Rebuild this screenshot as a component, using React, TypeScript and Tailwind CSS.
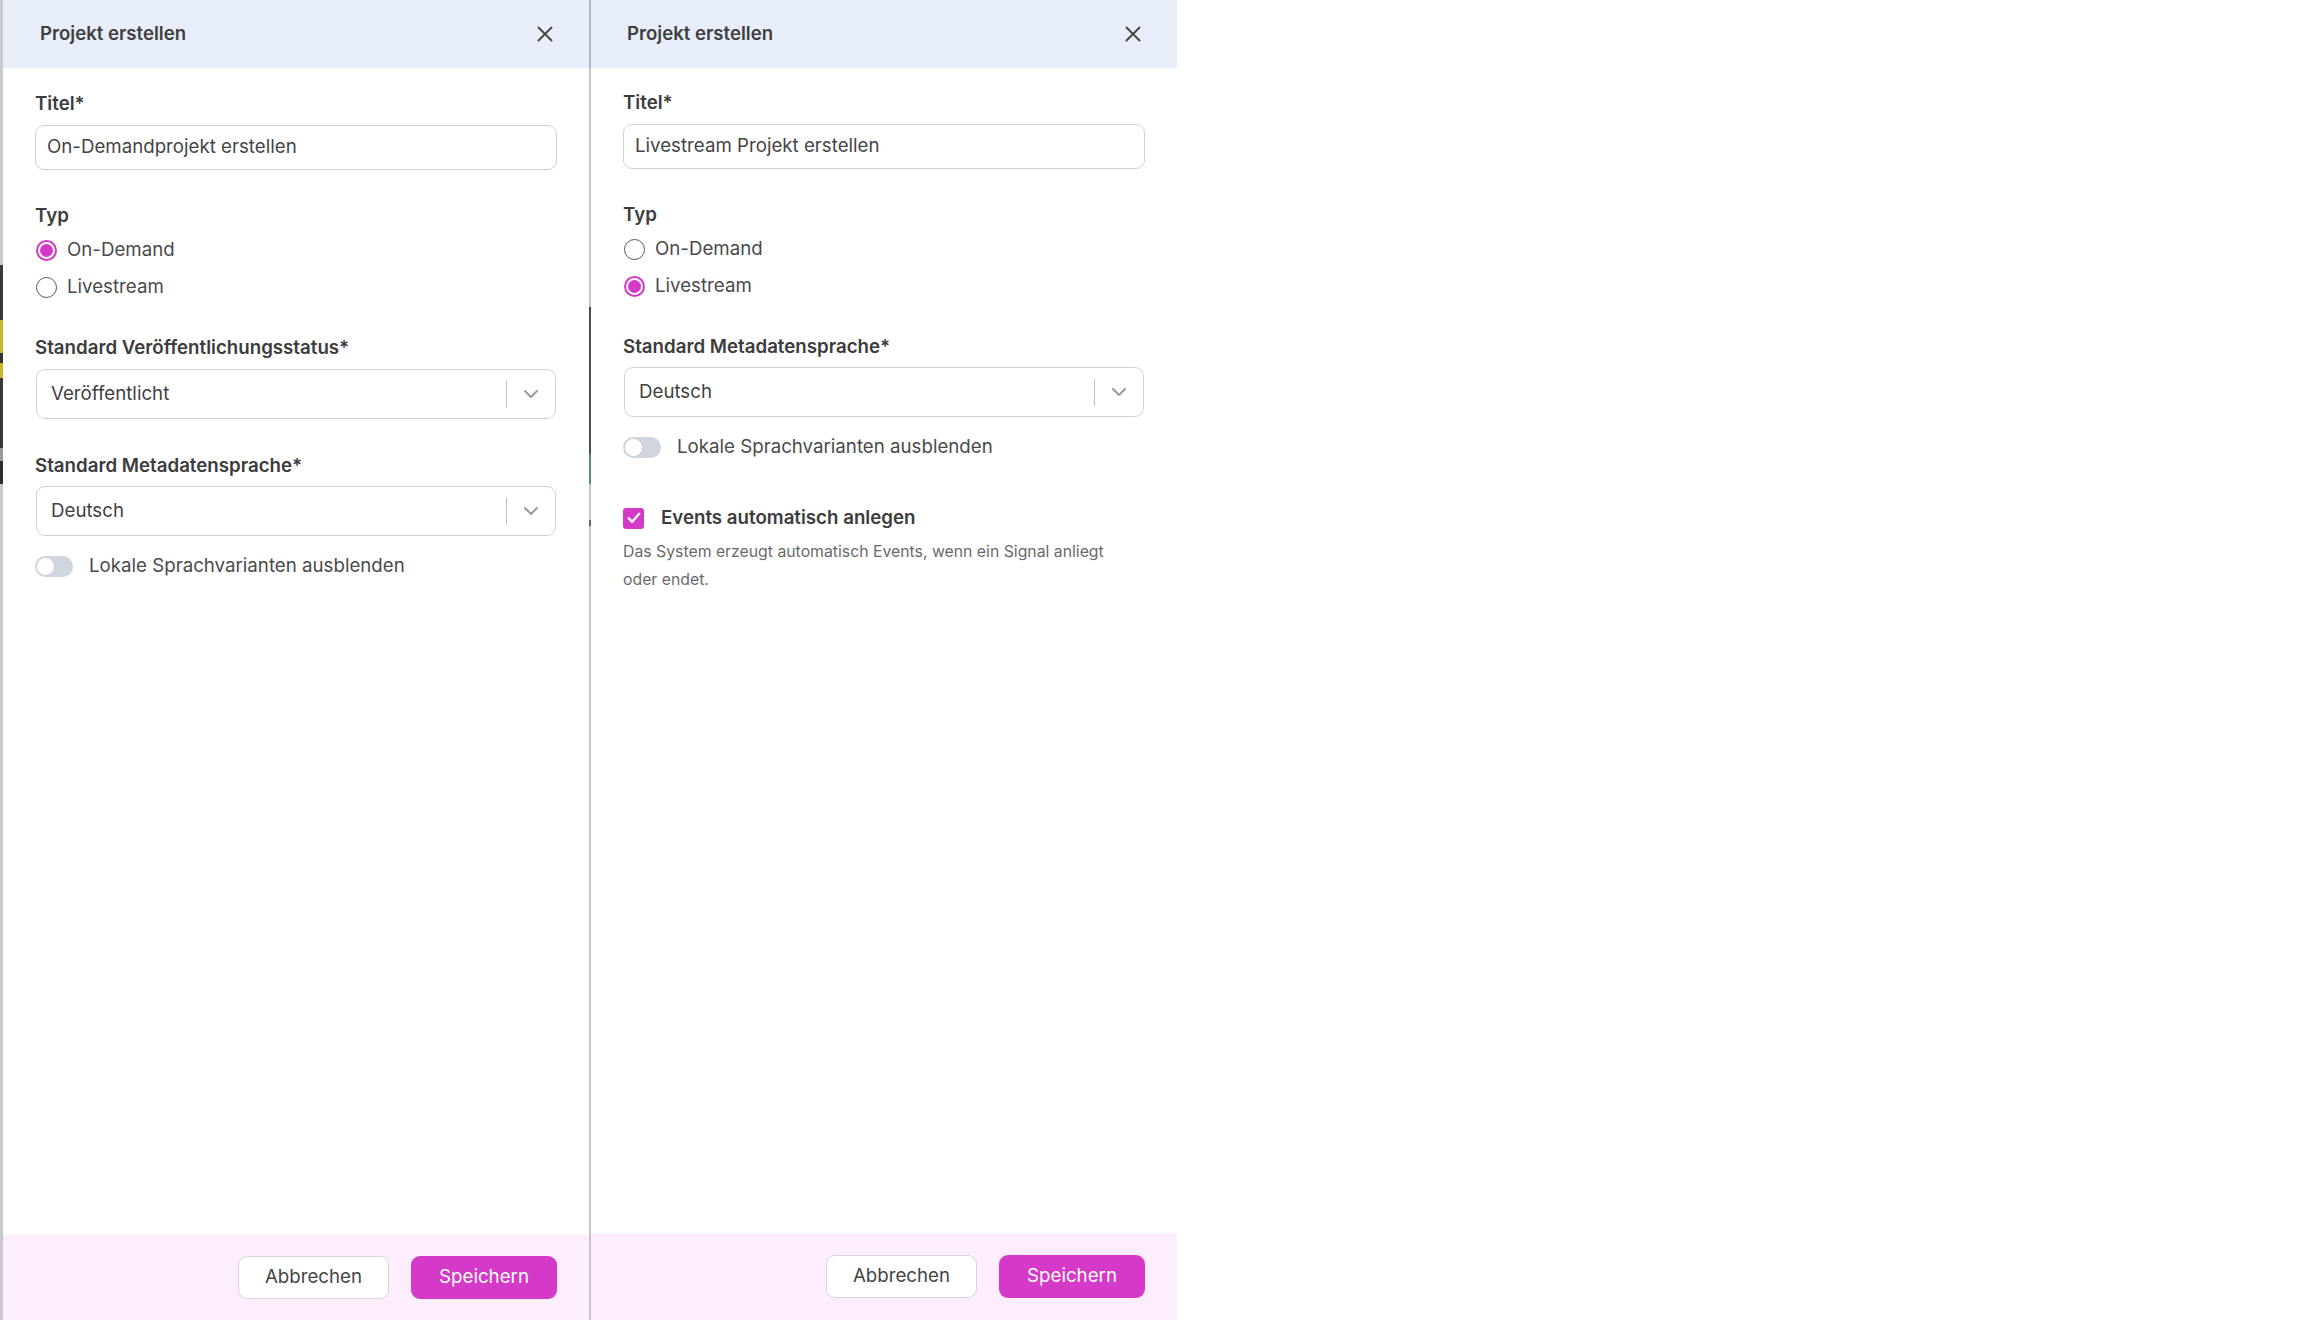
import React from "react";

function CloseIcon() {
  return (
    <svg width="16" height="16" viewBox="0 0 16 16" fill="none">
      <path d="M1.5 1.5L14.5 14.5M14.5 1.5L1.5 14.5" stroke="#454545" strokeWidth="1.9" strokeLinecap="round" />
    </svg>
  );
}

function Chevron() {
  return (
    <svg width="16" height="10" viewBox="0 0 16 10" fill="none">
      <path d="M2 2L8 8L14 2" stroke="#9a9a9a" strokeWidth="2" strokeLinecap="round" strokeLinejoin="round" />
    </svg>
  );
}

function Radio({ checked }: { checked: boolean }) {
  if (checked) {
    return (
      <span className="flex h-[21px] w-[21px] items-center justify-center rounded-full border-2 border-[#d43ac7] bg-white">
        <span className="h-[13px] w-[13px] rounded-full bg-[#d43ac7]" />
      </span>
    );
  }
  return <span className="h-[21px] w-[21px] rounded-full border-[1.7px] border-[#555] bg-white" />;
}

function RadioRow({ label, checked }: { label: string; checked: boolean }) {
  return (
    <div className="flex h-[37px] items-center gap-[10px] pl-[1px]">
      <Radio checked={checked} />
      <span className="text-[18.7px] text-[#4a4a4a]">{label}</span>
    </div>
  );
}

function Label({ children, className = "" }: { children: React.ReactNode; className?: string }) {
  return <div className={"h-[24px] text-[18.7px] font-semibold leading-[24px] text-[#3c3c3c] " + className}>{children}</div>;
}

function SelectBox({ value, className = "" }: { value: string; className?: string }) {
  return (
    <div className={"mx-[1px] flex h-[50px] items-center rounded-[9px] border border-[#cdd2da] bg-white " + className}>
      <span className="flex-1 pl-[14px] text-[18.7px] text-[#3f3f3f]">{value}</span>
      <span className="h-[27px] w-[1.5px] bg-[#bdbdbd]" />
      <span className="flex w-[48px] items-center justify-center">
        <Chevron />
      </span>
    </div>
  );
}

function Toggle({ label, className = "" }: { label: string; className?: string }) {
  return (
    <div className={"flex h-[21px] items-center gap-[16px] " + className}>
      <span className="flex h-[21px] w-[38px] items-center rounded-full bg-[#cfd6df] px-[2px]">
        <span className="h-[17px] w-[17px] rounded-full bg-white" />
      </span>
      <span className="text-[18.7px] text-[#4a4a4a]">{label}</span>
    </div>
  );
}

function TextInput({ value }: { value: string }) {
  return (
    <div className="mt-[9px] flex h-[45px] items-center rounded-[9px] border border-[#cdd2da] bg-white px-[11px] text-[18.7px] text-[#454545]">
      {value}
    </div>
  );
}

function Header({ pl }: { pl: string }) {
  return (
    <div className={"flex h-[68px] shrink-0 items-center justify-between bg-[#e7eef9] pr-[36px] " + pl}>
      <span className="text-[18.6px] font-semibold text-[#3f3f3f]">Projekt erstellen</span>
      <CloseIcon />
    </div>
  );
}

function Footer({ h }: { h: string }) {
  return (
    <div className={"flex shrink-0 items-center justify-end gap-[22px] bg-[#fdedfd] pr-[32px] " + h}>
      <button className="flex h-[43px] w-[151px] items-center justify-center rounded-[9px] border border-[#d3d7e0] bg-white text-[18.7px] text-[#444]">
        Abbrechen
      </button>
      <button className="flex h-[43px] w-[146px] items-center justify-center rounded-[9px] bg-[#d43ac7] text-[18.7px] text-white">
        Speichern
      </button>
    </div>
  );
}

function LeftStrip() {
  return (
    <div className="flex h-full w-[3px] shrink-0 flex-col">
      <div className="h-[265px] bg-[#c9c9c9]" />
      <div className="h-[55px] bg-[#3a3a3a]" />
      <div className="h-[33px] bg-[#c9b62a]" />
      <div className="h-[10px] bg-[#333]" />
      <div className="h-[15px] bg-[#c9b62a]" />
      <div className="h-[70px] bg-[#3a3a3a]" />
      <div className="h-[13px] bg-[#9a9a9a]" />
      <div className="h-[23px] bg-[#2e2e2e]" />
      <div className="flex-1 bg-[#c9c9c9]" />
    </div>
  );
}

function Divider() {
  return (
    <div className="flex h-full w-[2px] shrink-0 flex-col">
      <div className="h-[68px] bg-[#a9b8cf]" />
      <div className="h-[239px] bg-[#c6c6c6]" />
      <div className="h-[147px] bg-[#4a4a4a]" />
      <div className="h-[30px] bg-[#4f8f88]" />
      <div className="h-[36px] bg-[#c6c6c6]" />
      <div className="h-[6px] bg-[#666]" />
      <div className="flex-1 bg-[#c6c6c6]" />
    </div>
  );
}

function LeftPanel() {
  return (
    <div className="flex h-full w-[586px] shrink-0 flex-col bg-white">
      <Header pl="pl-[37px]" />
      <div className="flex-1 px-[32px] pt-[24px]">
        <Label>Titel*</Label>
        <TextInput value="On-Demandprojekt erstellen" />
        <Label className="mt-[34px]">Typ</Label>
        <div className="mt-[4px]">
          <RadioRow label="On-Demand" checked />
          <RadioRow label="Livestream" checked={false} />
        </div>
        <Label className="mt-[30px]">Standard Veröffentlichungsstatus*</Label>
        <SelectBox value="Veröffentlicht" className="mt-[9px]" />
        <Label className="mt-[35px]">Standard Metadatensprache*</Label>
        <SelectBox value="Deutsch" className="mt-[8px]" />
        <Toggle label="Lokale Sprachvarianten ausblenden" className="mt-[20px]" />
      </div>
      <Footer h="h-[85px]" />
    </div>
  );
}

function RightPanel() {
  return (
    <div className="flex h-full w-[586px] shrink-0 flex-col bg-white">
      <Header pl="pl-[36px]" />
      <div className="flex-1 px-[32px] pt-[23px]">
        <Label>Titel*</Label>
        <TextInput value="Livestream Projekt erstellen" />
        <Label className="mt-[34px]">Typ</Label>
        <div className="mt-[4px]">
          <RadioRow label="On-Demand" checked={false} />
          <RadioRow label="Livestream" checked />
        </div>
        <Label className="mt-[30px]">Standard Metadatensprache*</Label>
        <SelectBox value="Deutsch" className="mt-[8px]" />
        <Toggle label="Lokale Sprachvarianten ausblenden" className="mt-[20px]" />
        <div className="mt-[49px] flex h-[22px] items-center gap-[17px]">
          <span className="flex h-[21px] w-[21px] items-center justify-center rounded-[3px] bg-[#d43ac7]">
            <svg width="14" height="12" viewBox="0 0 14 12" fill="none">
              <path d="M1.8 6.4L5.2 9.8L12.2 1.8" stroke="white" strokeWidth="2.4" strokeLinecap="round" strokeLinejoin="round" />
            </svg>
          </span>
          <span className="text-[18.7px] font-semibold text-[#3c3c3c]">Events automatisch anlegen</span>
        </div>
        <p className="mt-[9px] w-[505px] text-[15.8px] leading-[28px] text-[#6a6a6a]">
          Das System erzeugt automatisch Events, wenn ein Signal anliegt oder endet.
        </p>
      </div>
      <Footer h="h-[87px]" />
    </div>
  );
}

export default function App() {
  return (
    <div className="flex h-[1320px] w-[2304px] bg-white font-['Inter','Noto_Sans',sans-serif]">
      <LeftStrip />
      <LeftPanel />
      <Divider />
      <RightPanel />
      <div className="flex-1 bg-white" />
    </div>
  );
}
